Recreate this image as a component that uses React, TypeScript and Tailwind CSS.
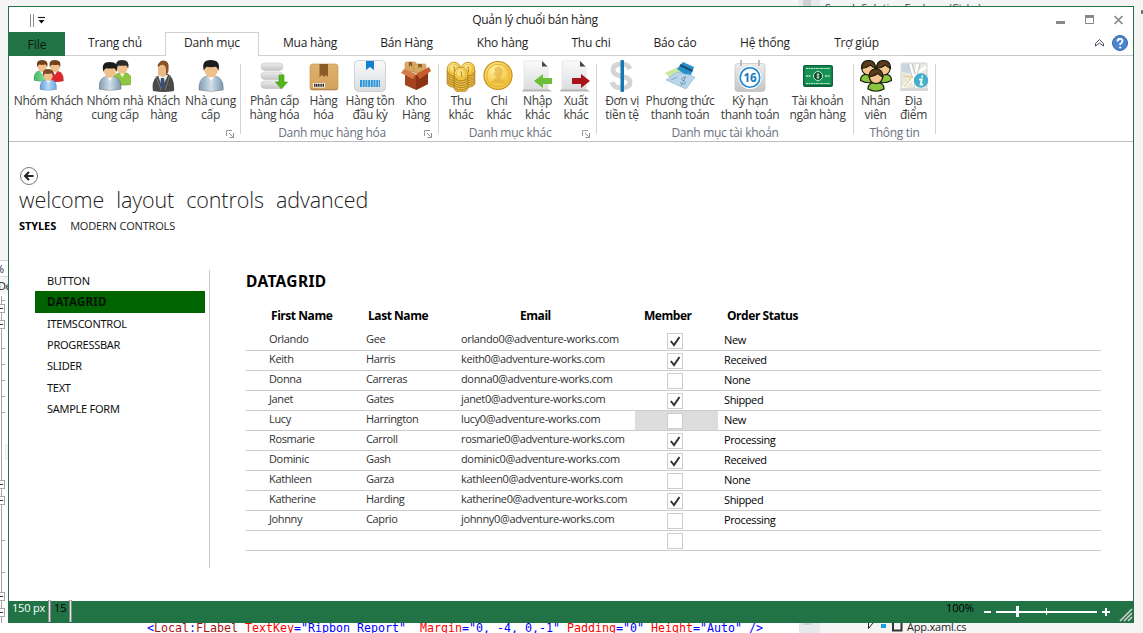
import React from "react";

type IconName =
  | "groupRed" | "pair" | "suit" | "person" | "database" | "box" | "barcode" | "openBox"
  | "coins" | "coin" | "import" | "export" | "dollar" | "cards" | "calendar" | "banknote"
  | "team" | "map";

function Person({ x, y, s, shirt, hair }: { x: number; y: number; s: number; shirt: string; hair: string }) {
  return (
    <g transform={`translate(${x} ${y}) scale(${s})`}>
      <path d="M0 31 Q-1 18 9 16 H16 Q26 18 25 31 Q12.500 34 0 31Z" fill={shirt} stroke="#0003" />
      <path d="M9 16 L12.500 22 L16 16Z" fill="#fff" />
      <ellipse cx="12.500" cy="9.500" rx="7" ry="8.500" fill="#efc08c" />
      <path d="M5 11 Q2 0 12 0 Q23 0 20 11 Q19 8 17.500 7 Q11 8 8 7 Q6 8 5 11Z" fill={hair} />
    </g>
  );
}

function Carton({ x, y, w, h }: { x: number; y: number; w: number; h: number }) {
  return (
    <g>
      <rect x={x} y={y} width={w} height={h} rx="1.500" fill="url(#tan)" stroke="#b98a48" strokeWidth=".6" />
      <path d={`M${x + w * 0.35} ${y} h${w * 0.3} v${h * 0.5} l${-w * 0.15} -2 l${-w * 0.15} 2Z`} fill="#8a5a22" />
    </g>
  );
}

function CoinStack({ x, y, n }: { x: number; y: number; n: number }) {
  return (
    <g>
      {Array.from({ length: n }, (_, i) => (
        <ellipse key={i} cx={x} cy={y + (n - i) * 2.3} rx="7" ry="4.500" fill="#e9bb42" stroke="#9a7014" strokeWidth=".7" />
      ))}
      <circle cx={x} cy={y} r="6.800" fill="url(#gold)" stroke="#b98716" strokeWidth=".8" />
      <circle cx={x} cy={y} r="4.700" fill="none" stroke="#deb23c" strokeWidth=".7" />
      <path d={`M${x - 1.5} ${y - 2} h2 v5`} fill="none" stroke="#c8942a" strokeWidth="1.100" />
    </g>
  );
}

function TeamMember({ x, y }: { x: number; y: number }) {
  return (
    <g stroke="#17200d" strokeWidth="1.200">
      <path d={`M${x - 8} ${y + 12} q0 -7 8 -6 q8 -1 8 6 q-8 4.500 -16 0Z`} fill="#8bc63e" />
      <circle cx={x} cy={y} r="6.600" fill="#f6c590" />
      <path d={`M${x - 7} ${y} q0 -8 7 -8 q7 0 7 8 q-3 -1 -5 -3.500 q-4 3 -9 3.500Z`} fill="#5d3a1b" />
    </g>
  );
}

function RibbonIcon({ name }: { name: IconName }) {
  const art: Record<IconName, React.ReactNode> = {
    groupRed: (
      <>
        <Person x={1} y={0} s={0.66} shirt="url(#green)" hair="#74401f" />
        <Person x={13.5} y={0} s={0.68} shirt="#e0262d" hair="#74401f" />
        <Person x={7} y={9} s={0.66} shirt="url(#sky)" hair="#7b4926" />
      </>
    ),
    pair: (
      <>
        <Person x={13.5} y={0} s={0.78} shirt="#8fc63f" hair="#2b2b2b" />
        <Person x={0} y={2} s={0.88} shirt="url(#steel)" hair="#1c1c1c" />
      </>
    ),
    suit: (
      <>
        <path d="M5 31 Q3 19 11 15 L20 14 Q27 18 26 31 Q16 33 5 31Z" fill="#4a4a4a" />
        <path d="M10 15 L14 28 L20 15Z" fill="#eee" />
        <path d="M13 18 h3 l1 7 -2 4 -3 -4Z" fill="#3a4f77" />
        <path d="M8 16 L13 30 M22 15 L17 30" stroke="#777" />
        <path d="M10 7 Q10 1 17 1 Q22 2 20 10 Q19 16 15 17 L10 15Z" fill="#e9b985" />
        <path d="M18 15 Q21 13 20.500 7 Q21 3 18.500 1.500 Q14 -1 11 3 Q9 5 10 7 Q13 4 16 5 Q18.500 7 18 11Z" fill="#885026" />
      </>
    ),
    person: <Person x={4} y={0} s={0.97} shirt="url(#steel)" hair="#1d1d1d" />,
    database: (
      <>
        {[3, 12, 21].map((y) => (
          <rect key={y} x="2" y={y} width="22" height="7.500" rx="3.700" fill="url(#grey)" stroke="#bcbcbc" strokeWidth=".5" />
        ))}
        <path d="M20 15 h5 v7 h3.500 l-6 7 l-6 -7 h3.500Z" fill="#54b51d" stroke="#3d9610" strokeWidth=".6" />
      </>
    ),
    box: (
      <>
        <rect x="2" y="4" width="28" height="26" rx="2.500" fill="url(#tan)" stroke="#c79a58" strokeWidth=".7" />
        <path d="M2.500 29.500 H29.500" stroke="#b08650" />
        <path d="M11.500 4 h8.500 v13 l-2 -2 -2 2 -2 -2 -2.500 2Z" fill="#8a5b25" />
        <rect x="5" y="23" width="12" height="4.500" fill="#fff" />
        <path d="M6 25.200 H16" stroke="#222" strokeWidth="3" strokeDasharray="1.300 .5" />
      </>
    ),
    barcode: (
      <>
        <rect x=".5" y=".5" width="31" height="31" rx="4" fill="url(#paper)" stroke="#ccd3d9" />
        <path d="M12 1 h8 v9 l-4 -3 -4 3Z" fill="#1180cf" />
        <path d="M6 23.500 H26" stroke="#2b98dd" strokeWidth="7" strokeDasharray="2 .7" />
      </>
    ),
    openBox: (
      <>
        <Carton x={5} y={2} w={11} h={10} />
        <Carton x={14} y={4} w={12} h={9} />
        <path d="M5 12 L16 15 L28 11 V24 L16 30 L5 25Z" fill="#a3441f" />
        <path d="M16 15 L28 11 V24 L16 30Z" fill="#8b3215" />
        <path d="M4 9 L16 14 L13 19 L1 13Z" fill="#d4794a" />
        <path d="M29 7 L16 14 L20 19 L31 11Z" fill="#c65d2d" />
      </>
    ),
    coins: (
      <>
        <CoinStack x={9} y={9} n={6} />
        <CoinStack x={23} y={9} n={6} />
        <CoinStack x={16} y={14} n={6} />
      </>
    ),
    coin: (
      <>
        <circle cx="15" cy="15.500" r="14" fill="url(#gold)" stroke="#c48c15" strokeWidth="1.200" />
        <circle cx="15" cy="15.500" r="11.300" fill="none" stroke="#e2b03a" />
        <path d="M11 9 Q13 6 17 7 Q21 9 19 14 Q19 17 17 18 Q21 20 23 23 H8 Q9 20 13 18 L12 15 L10 14 L12 12Z" fill="#e0ac35" opacity=".6" />
      </>
    ),
    import: (
      <>
        <path d="M2 1 H20 L26 7 V30 H2Z" fill="url(#paper)" stroke="#dedede" strokeWidth=".6" />
        <path d="M20 1 V6.500 H25.500Z" fill="#444" />
        <path d="M1 29.500 H27 L30 31.500 H0Z" fill="#b5b5b5" />
        <path d="M12 21 L21 14 V18 H30 V24 H21 V28Z" fill="#6cbd37" />
      </>
    ),
    export: (
      <>
        <path d="M2 1 H20 L26 7 V30 H2Z" fill="url(#paper)" stroke="#dedede" strokeWidth=".6" />
        <path d="M20 1 V6.500 H25.500Z" fill="#444" />
        <path d="M1 29.500 H27 L30 31.500 H0Z" fill="#b5b5b5" />
        <path d="M30 21 L21 14 V18 H12 V24 H21 V28Z" fill="#a9151b" />
      </>
    ),
    dollar: (
      <>
        <path d="M24 9 Q22 4 15.500 4 Q7 4 7 10 Q7 14.500 15 16 Q24 18 24 22 Q24 28 15.500 28 Q8 28 6 22" fill="none" stroke="#d4d4d4" strokeWidth="5" />
        <rect x="14.500" y="0" width="3.500" height="32" rx="1" fill="#1477ae" />
      </>
    ),
    cards: (
      <>
        <path d="M1 13 L14 7 L22 13 L8 20Z" fill="#c9e8a1" />
        <path d="M13 9 L19 2 L30 7 L27 15 L20 14Z" fill="#2790ce" />
        <path d="M16 5 L28.500 11" stroke="#194f71" strokeWidth="2.200" />
        <path d="M2 20 L13 12 L31 17 L22 29Z" fill="#b9d6ea" stroke="#93bad3" strokeWidth=".7" />
        <path d="M22 18 Q17 16.500 18 20 Q23 21 21 24 Q17 25 16 22 M22 16 L17 26 M7 20 L13 17" fill="none" stroke="#7698b1" strokeWidth=".9" />
      </>
    ),
    calendar: (
      <>
        <rect x="1" y="3.500" width="30" height="28" rx="3" fill="url(#grey)" stroke="#bbb" strokeWidth=".6" />
        <circle cx="16" cy="17.500" r="11.500" fill="#fff" />
        <circle cx="16" cy="17.500" r="9.800" fill="none" stroke="#1988d1" strokeWidth="1.600" />
        <path d="M7 0 V6 M25 0 V6" stroke="#b5b5b5" strokeWidth="1.800" />
        <text x="16" y="21.700" textAnchor="middle" fontSize="11.500" fontWeight="700" fill="#1779bd" fontFamily="Open Sans, sans-serif">16</text>
      </>
    ),
    banknote: (
      <>
        <rect x="1" y="5" width="30" height="22" rx="2" fill="#10633a" />
        <rect x="2.500" y="6.500" width="27" height="18.500" rx="1" fill="#169354" />
        <path d="M4 8.500 H28 M4 23.500 H28" stroke="#b7e1c5" strokeDasharray="2 .5" />
        <path d="M4 16 H9 M23 16 H28" stroke="#b7e1c5" strokeWidth="1.300" strokeDasharray="2 .5" />
        <circle cx="16" cy="16" r="4.500" fill="#084b2b" stroke="#c7e9ce" />
        <path d="M16 13 V19 M17.500 14.500 Q14.500 13.500 15 15.500 Q17.500 16 17 17.500 H14.500" stroke="#d4efd8" strokeWidth=".8" fill="none" />
      </>
    ),
    team: (
      <>
        <TeamMember x={8.500} y={8.500} />
        <TeamMember x={23.500} y={8.500} />
        <TeamMember x={16} y={17} />
      </>
    ),
    map: (
      <>
        <rect x="3" y="3" width="26" height="26" rx="1" fill="#ebe8df" stroke="#d4d4d4" />
        <path d="M4 4 H11 L14 14 L4 12Z" fill="#c8d6df" />
        <path d="M12 4 L17 28 M20 4 L18 14 L5 28 M18 14 L28 7" fill="none" stroke="#fff" strokeWidth="3" />
        <path d="M10.500 4 L14.500 18 M14 4 L17.500 14 M22 4 L19.500 14 L16 28" fill="none" stroke="#a6adb0" strokeWidth=".7" />
        <path d="M5 16 L14 17 L6 27" fill="none" stroke="#e6c77b" strokeWidth="1.200" />
        <path d="M2 28 H30 V31 H2Z" fill="#d9d9d9" />
        <circle cx="23" cy="20.500" r="7.200" fill="#43aecb" />
        <path d="M24 16.500 h.2 M21.800 19.500 H23.800 L22.600 24.500 H24.500" stroke="#fff" strokeWidth="1.800" strokeLinecap="round" fill="none" />
      </>
    ),
  };
  return <svg viewBox="0 0 32 32" className="block h-8 w-8 shrink-0">{art[name]}</svg>;
}

function Gradients() {
  return (
    <svg className="absolute h-0 w-0">
      <defs>
        <linearGradient id="steel"><stop stopColor="#7f9bb4" /><stop offset=".5" stopColor="#d3dfe8" /><stop offset="1" stopColor="#7895ae" /></linearGradient>
        <linearGradient id="sky"><stop stopColor="#5e9ee4" /><stop offset=".5" stopColor="#b9d8f8" /><stop offset="1" stopColor="#6aa5e6" /></linearGradient>
        <linearGradient id="green"><stop stopColor="#43bb64" /><stop offset="1" stopColor="#a6e9b5" /></linearGradient>
        <linearGradient id="grey" x2="0" y2="1"><stop stopColor="#ededed" /><stop offset="1" stopColor="#c5c5c5" /></linearGradient>
        <linearGradient id="paper" x2="0" y2="1"><stop stopColor="#fafafa" /><stop offset="1" stopColor="#dadcde" /></linearGradient>
        <linearGradient id="tan" x2="0" y2="1"><stop stopColor="#deb16b" /><stop offset="1" stopColor="#d3a25c" /></linearGradient>
        <radialGradient id="gold" cx=".4" cy=".3"><stop stopColor="#fff3a8" /><stop offset="1" stopColor="#f4c845" /></radialGradient>
      </defs>
    </svg>
  );
}

const tabs = [
  { label: "Trang chủ", box: "w-[100px]" },
  { label: "Danh mục", box: "w-[94px]" },
  { label: "Mua hàng", box: "w-[102px]" },
  { label: "Bán Hàng", box: "w-[91px]" },
  { label: "Kho hàng", box: "w-[101px]" },
  { label: "Thu chi", box: "w-[76px]" },
  { label: "Báo cáo", box: "w-[92px]" },
  { label: "Hệ thống", box: "w-[88px]" },
  { label: "Trợ giúp", box: "w-[95px]" },
];

type Item = [IconName, string, string, string];
const groups: { box: string; label: string; launcher: boolean; items: Item[] }[] = [
  { box: "w-[232px]", label: "", launcher: true, items: [
    ["groupRed", "Nhóm Khách", "hàng", "w-[79px]"],
    ["pair", "Nhóm nhà", "cung cấp", "w-[54px]"],
    ["suit", "Khách", "hàng", "w-[43px]"],
    ["person", "Nhà cung", "cấp", "w-[51px]"],
  ] },
  { box: "w-[198px] pl-[7px]", label: "Danh mục hàng hóa", launcher: true, items: [
    ["database", "Phân cấp", "hàng hóa", "w-[53px]"],
    ["box", "Hàng", "hóa", "w-[45px]"],
    ["barcode", "Hàng tồn", "đầu kỳ", "w-[48px]"],
    ["openBox", "Kho", "Hàng", "w-[44px]"],
  ] },
  { box: "w-[158px] pl-[3px]", label: "Danh mục khác", launcher: true, items: [
    ["coins", "Thu", "khác", "w-[38px]"],
    ["coin", "Chi", "khác", "w-[38px]"],
    ["import", "Nhập", "khác", "w-[39px]"],
    ["export", "Xuất", "khác", "w-[38px]"],
  ] },
  { box: "w-[257px] pl-[2px]", label: "Danh mục tài khoản", launcher: false, items: [
    ["dollar", "Đơn vị", "tiền tệ", "w-[46px]"],
    ["cards", "Phương thức", "thanh toán", "w-[70px]"],
    ["calendar", "Kỳ hạn", "thanh toán", "w-[70px]"],
    ["banknote", "Tài khoản", "ngân hàng", "w-[65px]"],
  ] },
  { box: "w-[82px] pl-[2px]", label: "Thông tin", launcher: false, items: [
    ["team", "Nhân", "viên", "w-[39px]"],
    ["map", "Địa", "điểm", "w-[37px]"],
  ] },
];

const people: [string, string, string, boolean, string][] = [
  ["Orlando", "Gee", "orlando0@adventure-works.com", true, "New"],
  ["Keith", "Harris", "keith0@adventure-works.com", true, "Received"],
  ["Donna", "Carreras", "donna0@adventure-works.com", false, "None"],
  ["Janet", "Gates", "janet0@adventure-works.com", true, "Shipped"],
  ["Lucy", "Harrington", "lucy0@adventure-works.com", false, "New"],
  ["Rosmarie", "Carroll", "rosmarie0@adventure-works.com", true, "Processing"],
  ["Dominic", "Gash", "dominic0@adventure-works.com", true, "Received"],
  ["Kathleen", "Garza", "kathleen0@adventure-works.com", false, "None"],
  ["Katherine", "Harding", "katherine0@adventure-works.com", true, "Shipped"],
  ["Johnny", "Caprio", "johnny0@adventure-works.com", false, "Processing"],
  ["", "", "", false, ""],
];

function TitleBar() {
  return (
    <header className="flex h-[25px] shrink-0">
      <div className="w-[300px] pl-[20px] pt-[6px]">
        <svg width="20" height="15" className="block">
          <path d="M1.500 1 V14 M4.500 1 V14" stroke="#8c8c8c" />
          <path d="M9 4.500 H16" stroke="#222" strokeWidth="1.200" />
          <path d="M9.500 7 H15.500 L12.500 10.500Z" fill="#111" />
        </svg>
      </div>
      <div className="w-[452px] pt-[4px] text-center leading-[18px] tracking-[-0.3px] text-[#222]">Quản lý chuổi bán hàng</div>
      <svg width="80" height="25" className="ml-auto mr-[2px] block">
        <path d="M5 14 h9 v3 h-9Z" fill="#888" />
        <path d="M34.500 8.500 h8 v8 h-8Z" fill="none" stroke="#888" />
        <path d="M34 9.500 h9" stroke="#888" strokeWidth="3" />
        <path d="M63.500 9 L71.500 17 M71.500 9 L63.500 17" stroke="#888" strokeWidth="1.700" />
      </svg>
    </header>
  );
}

function TabRow() {
  return (
    <nav className="flex h-[24px] shrink-0">
      <div className="w-[56px] bg-[#217346] pt-[4px] text-center leading-[18px] text-[#0b1510]">File</div>
      {tabs.map((t) => (
        <div
          key={t.label}
          className={`${t.box} pt-px text-center leading-[18px] tracking-[-0.2px] text-[#1e1e1e] ${
            t.label === "Danh mục" ? "border-x border-t border-[#d0d0d0]" : "border-b border-t border-b-[#d0d0d0] border-t-transparent"
          }`}
        >
          {t.label}
        </div>
      ))}
      <div className="flex flex-1 justify-end border-b border-[#c8c8c8] pr-[4px] pt-[2px]">
        <svg width="36" height="18" className="block">
          <path d="M2.500 9.500 L6.500 5.500 L10.500 9.500 V12 L6.500 9 L2.500 12Z" fill="none" stroke="#444b57" />
          <circle cx="27" cy="9" r="7.500" fill="#4a86cf" stroke="#3867a4" />
          <path d="M24.500 7.500 Q24.500 5 27 5 Q29.700 5 29.500 7.300 Q29 8.800 27.200 10 V11" fill="none" stroke="#fff" strokeWidth="1.800" />
          <circle cx="27.200" cy="13.500" r="1.100" fill="#fff" />
        </svg>
      </div>
    </nav>
  );
}

function Ribbon() {
  return (
    <section className="flex h-[86px] shrink-0 border-b border-[#bdbdbd] text-[#3c3c3c]">
      {groups.map((g, i) => (
        <div key={i} className="flex">
          <div className={`${g.box} -mr-px flex flex-col`}>
            <div className="flex h-[68px] pt-[4px]">
              {g.items.map(([icon, a, b, box]) => (
                <div key={a} className={`${box} flex shrink-0 flex-col items-center`}>
                  <RibbonIcon name={icon} />
                  <div className="mt-[2px] flex flex-col items-center whitespace-nowrap leading-[14px] tracking-[-0.3px]">
                    <span>{a}</span>
                    <span>{b}</span>
                  </div>
                </div>
              ))}
            </div>
            <div className="flex h-[16px]">
              <div className={`flex-1 whitespace-nowrap text-center leading-[18px] tracking-[-0.3px] text-[#6a7080] ${i === 1 ? "pr-[7px]" : "pr-[3px]"}`}>{g.label}</div>
              {g.launcher && (
                <svg width="16" height="16" className="block shrink-0">
                  <path d="M1.500 12 V6.500 H7" fill="none" stroke="#9a9a9a" />
                  <path d="M4 9 L7.500 12.500 M8.500 9 V13.500 H4.500" fill="none" stroke="#8a8a8a" />
                </svg>
              )}
            </div>
          </div>
          <div className="mt-[8px] h-[70px] w-px bg-[#d2d2d2]" />
        </div>
      ))}
    </section>
  );
}

function CheckBox({ checked }: { checked: boolean }) {
  return (
    <div className="h-4 w-4 border border-[#cccccc] bg-white">
      {checked && (
        <svg width="14" height="14" className="block">
          <path d="M2.800 7 L6 11 L11.500 3" fill="none" stroke="#333" strokeWidth="2" />
        </svg>
      )}
    </div>
  );
}

function DataGrid() {
  return (
    <section className="w-[855px]">
      <h2 className="h-[23px] font-['Noto_Sans'] text-[15.500px] font-bold leading-[23px] tracking-[0.350px] text-black">DATAGRID</h2>
      <div className="mt-[13px] grid h-[25px] grid-cols-[117px_95px_177px_83px_1fr] font-bold leading-[19px] tracking-[-0.45px] text-black">
        <span className="pl-[25px]">First Name</span>
        <span className="pl-[5px]">Last Name</span>
        <span className="pl-[62px]">Email</span>
        <span className="pl-[9px]">Member</span>
        <span className="pl-[9px]">Order Status</span>
      </div>
      {people.map(([first, last, email, member, status], i) => (
        <div key={i} className="grid h-[20px] grid-cols-[117px_95px_177px_83px_1fr] whitespace-nowrap border-b border-[#cccccc] text-[11px] leading-[15px] tracking-[-0.36px] text-[#303030]">
          <span className="pl-[23px]">{first}</span>
          <span className="pl-[3px]">{last}</span>
          <span className="pl-[3px]">{email}</span>
          <span className={`pl-[32px] pt-[2px] ${i === 4 ? "bg-[#dddddd]" : ""}`}><CheckBox checked={member} /></span>
          <span className="pl-[6px] leading-[17px] tracking-[-0.38px] text-black">{status}</span>
        </div>
      ))}
    </section>
  );
}

const pages = ["BUTTON", "DATAGRID", "ITEMSCONTROL", "PROGRESSBAR", "SLIDER", "TEXT", "SAMPLE FORM"];

function Content() {
  return (
    <main className="flex flex-1 flex-col">
      <svg width="20" height="20" className="ml-[10px] mt-[24px] block shrink-0">
        <circle cx="10" cy="10" r="8.500" fill="none" stroke="#777" />
        <path d="M14.500 10 H6.500 M10 6 L6 10 L10 14" fill="none" stroke="#222" strokeWidth="2" />
      </svg>
      <div className="ml-[10px] flex h-[30px] gap-[12px] text-[21.500px] font-light leading-[28px] tracking-[-0.1px] text-[#222]">
        <span>welcome</span><span>layout</span><span>controls</span><span>advanced</span>
      </div>
      <div className="ml-[10px] flex h-[18px] gap-[14px] text-[11px] leading-[20px] text-[#222]">
        <b className="tracking-[-0.1px] text-black">STYLES</b>
        <span className="tracking-[-0.17px]">MODERN CONTROLS</span>
      </div>
      <div className="mt-[36px] flex">
        <ul className="ml-[26px] h-[298px] w-[175px] border-r border-[#cccccc] font-['Noto_Sans'] text-[11px] tracking-[-0.27px] text-[#111]">
          {pages.map((p) => (
            <li key={p} className={`h-[21.330px] w-[170px] pl-[12px] leading-[22px] ${p === "DATAGRID" ? "bg-[#006400] text-[11.500px] font-bold tracking-[0.250px] text-[#061406]" : ""}`}>{p}</li>
          ))}
        </ul>
        <div className="ml-[36px]"><DataGrid /></div>
      </div>
    </main>
  );
}

function StatusBar() {
  return (
    <footer className="flex h-[21px] shrink-0 whitespace-nowrap bg-[#217346] text-[11px] leading-[14px]">
      <span className="w-[39px] pl-[3px] tracking-[-0.2px] text-white">150 px</span>
      <i className="-mt-px h-[22px] w-[3px] border-x border-x-[#8d8d8d] bg-[#e4e4e4]" />
      <span className="w-[18px] pl-[3px] text-black">15</span>
      <i className="-mt-px h-[22px] w-[3px] border-x border-x-[#8d8d8d] bg-[#e4e4e4]" />
      <span className="ml-auto w-[38px] text-black">100%</span>
      <svg width="149" height="21" className="block">
        <path d="M0 11 h7 M12 11 H113 M118 11 h8 M122 7 v8" stroke="#fff" strokeWidth="2" />
        <path d="M33.500 5 V16" stroke="#fff" strokeWidth="3" />
        <path d="M62.500 7 V14" stroke="#fff" />
        <path d="M136 20 L148 8 M140 20 L148 12 M144 20 L148 16" stroke="#d0d0d0" strokeWidth="1.600" />
      </svg>
    </footer>
  );
}

function Editor() {
  return (
    <>
      <svg width="8" height="633" className="absolute left-0 top-0">
        <path d="M0 260 H8 V633 H0Z" fill="#fff" />
        <path d="M0 260.500 H8 M0 276.500 H8" stroke="#d5d7e3" />
        <path d="M0 277 H8 V294 H0Z" fill="#f5f5f5" />
        <path d="M1.500 296 V633 M1 300.500 H5 M1 348.500 H5 M1 364.500 H5 M1 380.500 H5 M1 396.500 H5 M1 412.500 H5 M1 540.500 H5 M1 572.500 H5" stroke="#a5a5a5" />
        {[308, 324, 484, 500, 596, 612].map((y) => (
          <g key={y}>
            <rect x="-3.500" y={y - 3.5} width="8" height="8" fill="#fff" stroke="#a5a5a5" />
            <path d={`M-1 ${y + 0.5} H3`} stroke="#333" />
          </g>
        ))}
        <rect x="5.500" y="444.500" width="5" height="15" fill="#f5f5f5" stroke="#eee" />
      </svg>
      <div className="absolute left-[-5px] top-[262px] h-[14px] w-[13px] overflow-hidden text-[11px] leading-[14px] text-[#222]">%</div>
      <div className="absolute left-[-2px] top-[279px] h-[14px] w-[10px] overflow-hidden text-[11px] leading-[14px] tracking-[-0.4px] text-[#222]">De</div>
      <div className="absolute left-0 top-[623px] flex h-[10px] w-[1143px] overflow-hidden bg-[#f5f5f5]">
        <pre className="w-[799px] bg-white pl-[147px] font-['DejaVu_Sans_Mono'] text-[11.630px] leading-[11px] text-[#0000ff]">
          &lt;<span className="text-[#a31515]">Local</span>:<span className="text-[#a31515]">FLabel</span>{" "}
          <span className="text-[#ff0000]">TextKey</span>="Ripbon Report"{"  "}
          <span className="text-[#ff0000]">Margin</span>="0, -4, 0,-1"{" "}
          <span className="text-[#ff0000]">Padding</span>="0"{" "}
          <span className="text-[#ff0000]">Height</span>="Auto" /&gt;
        </pre>
        <div className="w-[21px] bg-[#e7e8ec]"><div className="ml-[4px] h-[2px] w-[8px] bg-[#cfd0d6]" /></div>
        <svg width="87" height="10" className="block">
          <path d="M48.500 -3 V5.500 L53 0Z" fill="none" stroke="#222" />
          <path d="M61 1 h5 v4 h-5Z" fill="#1f9be0" />
          <path d="M73 0 V7.500 H81.500 V0" fill="none" stroke="#333" strokeWidth="2" />
        </svg>
        <span className="text-[11px] leading-[7px] tracking-[-0.2px] text-[#1e1e1e]">App.xaml.cs</span>
      </div>
      <div className="absolute left-[799px] top-0 h-[6px] w-[300px] overflow-hidden text-[11px]">
        <div className="flex">
          <div className="h-[6px] w-[21px] bg-[#e7e8ec] pl-[4px]"><div className="h-[6px] w-[8px] bg-[#cfd0d6]" /></div>
          <span className="pl-[5px] leading-[15px] tracking-[-0.2px] text-[#444]">Search Solution Explorer (Ctrl+;)</span>
        </div>
      </div>
      <div className="absolute left-[1141px] top-[10px] h-[4px] w-[2px] rounded-full bg-[#666]" />
    </>
  );
}

export default function App() {
  return (
    <div className="relative h-[633px] w-[1143px] overflow-hidden bg-[#f5f5f5] font-['Open_Sans','Noto_Sans',sans-serif] text-[12px]">
      <Gradients />
      <Editor />
      <div className="absolute left-[8px] top-[6px] flex h-[617px] w-[1126px] flex-col border border-[#217346] bg-white">
        <TitleBar />
        <TabRow />
        <Ribbon />
        <Content />
        <StatusBar />
      </div>
    </div>
  );
}
